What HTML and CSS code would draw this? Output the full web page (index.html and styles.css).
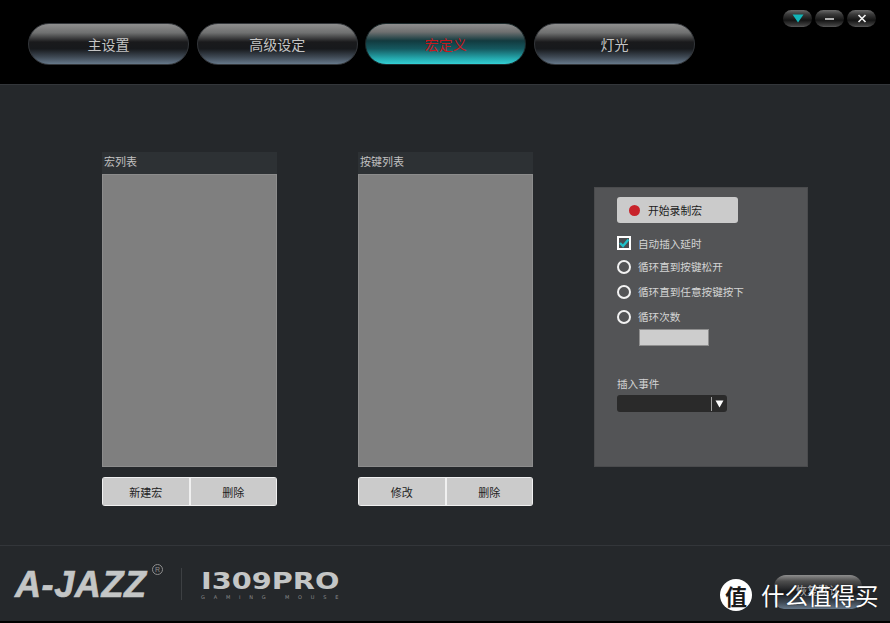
FILE: index.html
```html
<!DOCTYPE html>
<html lang="zh">
<head>
<meta charset="utf-8">
<title>宏定义</title>
<link rel="stylesheet" href="styles.css">
</head>
<body>
<div class="app">
  <header class="topbar">
    <nav class="tabs">
      <div class="tab">主设置</div>
      <div class="tab">高级设定</div>
      <div class="tab tab-active">宏定义</div>
      <div class="tab">灯光</div>
    </nav>
    <div class="winbtns">
      <div class="winbtn"><svg width="14" height="9" viewBox="0 0 14 9"><path d="M1.5 0.5H12.5L7 8.5Z" fill="#12b5b8"/></svg></div>
      <div class="winbtn"><svg width="12" height="4" viewBox="0 0 12 4"><path d="M1 2H10" stroke="#d8d8d8" stroke-width="1.6"/></svg></div>
      <div class="winbtn"><svg width="10" height="9" viewBox="0 0 10 9"><path d="M1.5 1L8.5 8M8.5 1L1.5 8" stroke="#f0f0f0" stroke-width="1.7"/></svg></div>
    </div>
  </header>
  <main class="content">
    <section class="list-col">
      <div class="list-title">宏列表</div>
      <div class="list-body"></div>
      <div class="btn-pair"><div class="pair-btn">新建宏</div><div class="pair-btn">删除</div></div>
    </section>
    <section class="list-col">
      <div class="list-title">按键列表</div>
      <div class="list-body"></div>
      <div class="btn-pair"><div class="pair-btn">修改</div><div class="pair-btn">删除</div></div>
    </section>
    <section class="panel">
      <div class="record-btn"><span class="record-dot"></span><span class="record-label">开始录制宏</span></div>
      <div class="opt opt-check">
        <svg class="check" width="14" height="14" viewBox="0 0 14 14"><rect width="14" height="14" fill="#fff"/><rect x="2" y="2" width="10" height="10" fill="#4a4c4f"/><path d="M3 7L6 10L11.5 3.5" stroke="#1fc0c8" stroke-width="2.4" fill="none"/></svg>
        <span>自动插入延时</span>
      </div>
      <div class="opt"><span class="radio"></span><span>循环直到按键松开</span></div>
      <div class="opt"><span class="radio"></span><span>循环直到任意按键按下</span></div>
      <div class="opt"><span class="radio"></span><span>循环次数</span></div>
      <div class="count-input"></div>
      <div class="event-label">插入事件</div>
      <div class="select">
        <span class="select-sep"></span>
        <svg width="9" height="8" viewBox="0 0 9 8"><path d="M0.5 0.5H8.5L4.5 7.5Z" fill="#fff"/></svg>
      </div>
    </section>
  </main>
  <footer class="footer">
    <div class="logo"><span class="logo-mark">A-JAZZ</span><span class="logo-reg">R</span></div>
    <div class="model">
      <div class="model-name">I309PRO</div>
      <div class="model-sub">GAMING MOUSE</div>
    </div>
    <div class="reset">恢复默认</div>
    <div class="watermark">
      <span class="wm-badge">值</span>
      <span class="wm-text">什么值得买</span>
    </div>
  </footer>
</div>
</body>
</html>
```
FILE: styles.css
```css
* { box-sizing: border-box; }
html, body { margin: 0; padding: 0; background: #000; }
body { font-family: "Noto Sans CJK SC", "Liberation Sans", sans-serif; }
.app { width: 890px; height: 623px; display: flex; flex-direction: column; overflow: hidden; background: #000; }

.topbar { height: 84px; flex: none; background: #000; display: flex; justify-content: space-between; padding: 23px 14px 0 28px; }
.tabs { display: flex; gap: 7.67px; align-items: flex-start; }
.tab {
  width: 161px; height: 42px; border-radius: 21px; border: 1px solid #33363a;
  display: flex; align-items: center; justify-content: center;
  color: #c4c4c4; font-size: 14px;
  background: linear-gradient(#8e8e8e 0%, #6f7070 22%, #1a1a1c 45%, #17191c 62%, #3e4853 82%, #66788a 100%);
}
.tab-active {
  color: #c8191e; border-color: #1c2a2c;
  background: linear-gradient(#8e8e8e 0%, #6f7070 20%, #123a3f 42%, #15585f 62%, #25a9ae 86%, #33cfd4 100%);
}
.winbtns { display: flex; gap: 3px; margin-top: -13px; align-self: flex-start; }
.winbtn {
  width: 29px; height: 17px; border-radius: 9px; display: flex; align-items: center; justify-content: center;
  background: linear-gradient(#6a6a6a 0%, #3a3a3a 25%, #141414 60%, #3e3e3e 90%, #5a5a5a 100%);
}

.content { flex: none; height: 461px; background: #25282b; border-top: 1px solid #33363a; display: flex; align-items: flex-start; padding: 67px 0 0 102px; }
.list-col { width: 175px; margin-right: 81px; display: flex; flex-direction: column; }
.list-title { height: 22px; background: #2d3134; color: #c0c0c0; font-size: 11px; line-height: 19px; padding-left: 2px; }
.list-body { height: 293px; background: #7f7f7f; border: 1px solid #8c8c8c; }
.btn-pair { margin-top: 10px; height: 29px; width: 175px; display: flex; gap: 2px; padding: 1px; background: #f0f0f0; border-radius: 3px; }
.pair-btn { flex: 1; background: #cbcbcb; color: #222; font-size: 11px; display: flex; align-items: center; justify-content: center; }

.panel { width: 214px; height: 280px; margin: 35px 0 0 -20px; background: #535456; border: 1px solid #4a4b4d; padding: 9px 0 0 22px; color: #d4d4d4; font-size: 10.6px; display: flex; flex-direction: column; align-items: flex-start; }
.record-btn { width: 121px; height: 26px; background: #cbcbcb; border-radius: 3px; display: flex; align-items: center; color: #1c1c1c; padding-left: 12px; gap: 8px; }
.record-label { font-size: 10.8px; }
.record-dot { width: 11px; height: 11px; border-radius: 50%; background: #c8232a; }
.opt { height: 25px; display: flex; align-items: center; gap: 7px; }
.opt-check { margin-top: 9px; height: 22px; }
.radio { width: 14px; height: 14px; border: 2px solid #f2f2f2; border-radius: 50%; }
.count-input { width: 70px; height: 17px; margin: 0 0 0 22px; background: #cdcdcd; border: 1px solid #8f8f8f; }
.event-label { margin-top: 30px; line-height: 16px; }
.select { width: 110px; height: 17px; margin-top: 3px; background: #2a2a2a; border-radius: 3px; display: flex; align-items: center; justify-content: flex-end; padding-right: 3px; gap: 3px; }
.select-sep { width: 1px; height: 14px; background: #a0a0a0; }

.footer { flex: none; height: 76px; background: #25282b; border-top: 1px solid #33363a; position: relative; display: flex; align-items: flex-start; }
.logo { width: 182px; height: 32px; margin-top: 22px; padding-left: 15px; border-right: 1px solid #3d4043; position: relative; }
.logo-mark { font-family: "Liberation Sans", sans-serif; font-weight: 700; font-style: italic; font-size: 36px; line-height: 33px; color: #c4c6c6; letter-spacing: 0.6px; display: inline-block; -webkit-text-stroke: 0.7px #c4c6c6; }
.logo-reg { position: absolute; left: 152px; top: -4px; width: 11px; height: 11px; border: 1px solid #8e8e8e; border-radius: 50%; color: #8e8e8e; font: 7px/9px "Liberation Sans", sans-serif; text-align: center; }
.model { margin: 25px 0 0 19px; color: #c4c6c6; font-family: "DejaVu Sans", sans-serif; }
.model-name { font-size: 23px; font-weight: 700; line-height: 20px; transform: scaleX(1.25); transform-origin: left center; }
.model-sub { font-size: 5px; line-height: 7px; margin-top: 3px; letter-spacing: 8.8px; color: #8a8c8c; white-space: nowrap; }
.reset { position: absolute; left: 774px; top: 29px; width: 88px; height: 34px; border-radius: 12px 12px 10px 10px; background: linear-gradient(#8e8e8e 0%, #4e4e4e 18%, #17191c 50%, #3e4853 80%, #66788a 100%); color: #b8b8b8; font-size: 11px; text-align: center; line-height: 30px; }
.watermark { position: absolute; left: 720px; top: 33px; display: flex; align-items: center; gap: 9px; }
.wm-badge { width: 32px; height: 32px; border-radius: 50%; background: #fff; color: #1a1a1a; font-size: 22px; font-weight: 700; line-height: 32px; text-align: center; }
.wm-text { color: #fff; font-size: 23.5px; line-height: 32px; text-shadow: 0 0 2px rgba(0,0,0,.5); white-space: nowrap; }
```
